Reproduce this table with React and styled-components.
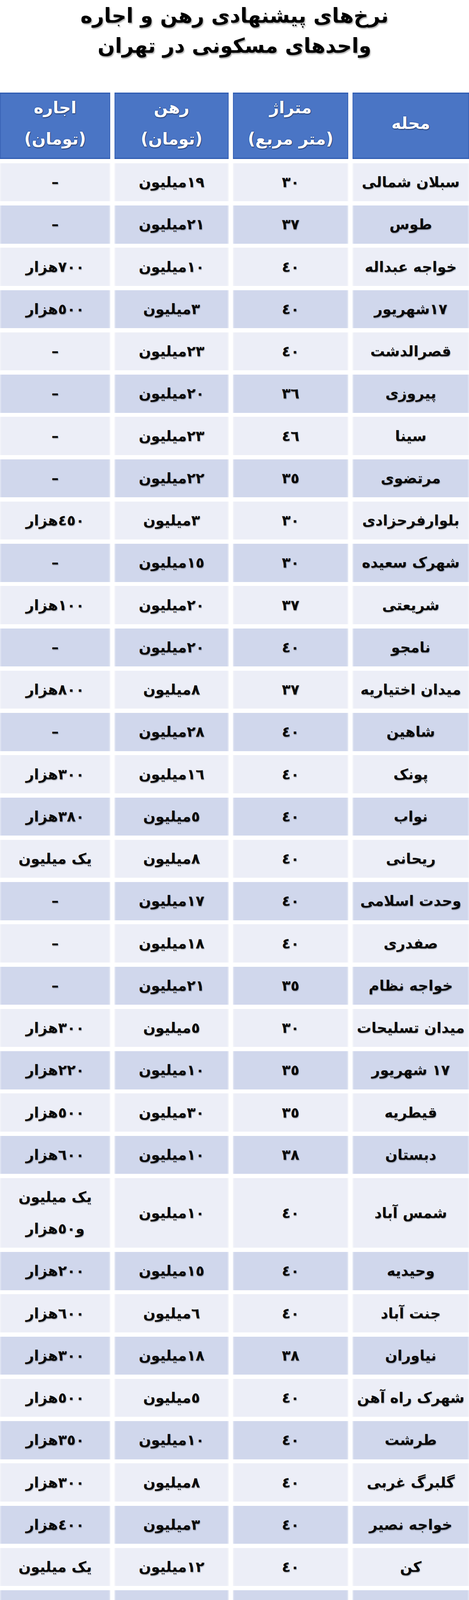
import React from "react";
import styled, { createGlobalStyle } from "styled-components";

const GlobalStyle = createGlobalStyle`
  html, body {
    margin: 0;
    padding: 0;
    background: #ffffff;
  }
  body {
    font-family: "DejaVu Sans", "Noto Sans", sans-serif;
  }
`;

// ارقام را به شکل عربی-هندی نشان می‌دهیم، مثل تصویر
const fa = (s) => s.replace(/[0-9]/g, (d) => String.fromCharCode(0x0660 + Number(d)));

const rows = [
  ["سبلان شمالی", "30", "19میلیون", "–"],
  ["طوس", "37", "21میلیون", "–"],
  ["خواجه عبداله", "40", "10میلیون", "700هزار"],
  ["17شهریور", "40", "3میلیون", "500هزار"],
  ["قصرالدشت", "40", "23میلیون", "–"],
  ["پیروزی", "36", "20میلیون", "–"],
  ["سینا", "46", "23میلیون", "–"],
  ["مرتضوی", "35", "22میلیون", "–"],
  ["بلوارفرحزادی", "30", "3میلیون", "450هزار"],
  ["شهرک سعیده", "30", "15میلیون", "–"],
  ["شریعتی", "37", "20میلیون", "100هزار"],
  ["نامجو", "40", "20میلیون", "–"],
  ["میدان اختیاریه", "37", "8میلیون", "800هزار"],
  ["شاهین", "40", "28میلیون", "–"],
  ["پونک", "40", "16میلیون", "300هزار"],
  ["نواب", "40", "5میلیون", "380هزار"],
  ["ریحانی", "40", "8میلیون", "یک میلیون"],
  ["وحدت اسلامی", "40", "17میلیون", "–"],
  ["صفدری", "40", "18میلیون", "–"],
  ["خواجه نظام", "35", "21میلیون", "–"],
  ["میدان تسلیحات", "30", "5میلیون", "300هزار"],
  ["17 شهریور", "35", "10میلیون", "220هزار"],
  ["قیطریه", "35", "30میلیون", "500هزار"],
  ["دبستان", "38", "10میلیون", "600هزار"],
  ["شمس آباد", "40", "10میلیون", "یک میلیون\nو50هزار"],
  ["وحیدیه", "40", "15میلیون", "200هزار"],
  ["جنت آباد", "40", "6میلیون", "600هزار"],
  ["نیاوران", "38", "18میلیون", "300هزار"],
  ["شهرک راه آهن", "40", "5میلیون", "500هزار"],
  ["طرشت", "40", "10میلیون", "350هزار"],
  ["گلبرگ غربی", "40", "8میلیون", "300هزار"],
  ["خواجه نصیر", "40", "3میلیون", "400هزار"],
  ["کن", "40", "12میلیون", "یک میلیون"],
  ["دربند", "35", "12میلیون", "350هزار"],
  ["تهرانپارس", "40", "11میلیون", "250هزار"],
  ["مجیدیه", "40", "7میلیون", "650هزار"],
  ["شهرزیبا", "40", "6میلیون", "600هزار"],
];

const headers = ["محله", "متراژ\n(متر مربع)", "رهن\n(تومان)", "اجاره\n(تومان)"];

const Lines = ({ text }) =>
  text.split("\n").map((line, i) => <Line key={i}>{fa(line)}</Line>);

export default function App() {
  return (
    <>
      <GlobalStyle />
      <Page dir="rtl">
        <Title>
          <Line>نرخ‌های پیشنهادی رهن و اجاره</Line>
          <Line>واحدهای مسکونی در تهران</Line>
        </Title>
        <Table>
          {headers.map((h) => (
            <HeadCell key={h}>
              <Lines text={h} />
            </HeadCell>
          ))}
          {rows.map((r, i) =>
            r.map((c, j) => (
              <Cell key={i + "-" + j} $alt={i % 2 === 1}>
                <Lines text={c} />
              </Cell>
            ))
          )}
        </Table>
      </Page>
    </>
  );
}

const Page = styled.div`
  width: 1200px;
  direction: rtl;
`;

const Title = styled.h1`
  margin: 0 0 81px;
  padding-top: 2px;
  font-family: "DejaVu Sans", sans-serif;
  font-weight: 700;
  font-size: 52px;
  line-height: 77px;
  color: #000;
  text-align: center;
  text-shadow: 2px 3px 3px rgba(0, 0, 0, 0.35);
`;

const Line = styled.div`
  display: block;
  white-space: nowrap;
`;

const Table = styled.div`
  display: grid;
  grid-template-columns: 298px 295px 292px 282px;
  column-gap: 11px;
  row-gap: 10.75px;
`;

const HeadCell = styled.div`
  box-sizing: border-box;
  display: flex;
  flex-direction: column;
  justify-content: center;
  align-items: center;
  height: 170px;
  padding-bottom: 12px;
  background: #4a75c5;
  border-top: 3px solid #2f5cb2;
  border-bottom: 3px solid #2f5cb2;
  box-shadow: inset 2px 0 0 #3a64b6, inset -2px 0 0 #3a64b6;
  color: #ffffff;
  font-weight: 700;
  font-size: 42px;
  line-height: 80px;
  text-shadow: 0 0 3px #1f3f86, 1px 2px 2px rgba(0, 0, 0, 0.45);
`;

const Cell = styled.div`
  display: flex;
  flex-direction: column;
  justify-content: center;
  align-items: center;
  padding: 8.25px 0;
  background: ${(p) => (p.$alt ? "#d0d7ec" : "#eceef7")};
  box-shadow: inset 3px 0 0 rgba(255, 255, 255, 0.3), inset -3px 0 0 rgba(255, 255, 255, 0.3);
  color: #0a0a0a;
  font-weight: 700;
  font-size: 37px;
  line-height: 81px;
  text-shadow: 1px 2px 2px rgba(0, 0, 0, 0.3);

  ${Line} {
    height: 81px;
  }
`;
